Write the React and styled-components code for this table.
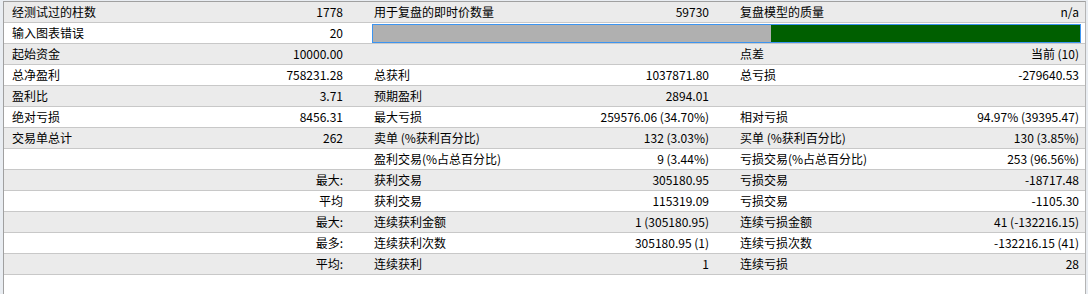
import React from 'react';
import styled, { createGlobalStyle } from 'styled-components';

const GlobalStyle = createGlobalStyle`
  html, body {
    margin: 0;
    padding: 0;
    background: #ffffff;
  }
  body {
    font-family: "Noto Sans CJK SC", "Noto Sans", sans-serif;
    font-size: 12px;
    color: #000;
  }
`;

const Page = styled.div`
  height: 294px;
  box-sizing: border-box;
  padding: 1px 2px 0 3px;
  background: #e9edf2;
`;

const Frame = styled.div`
  height: 100%;
  box-sizing: border-box;
  background: #fff;
  border-top: 1px solid #a0a0a0;
  border-left: 1px solid #a0a0a0;
  border-right: 1px solid #b4b4b4;
`;

const Row = styled.div`
  display: grid;
  grid-template-columns: 196px 170px 190px 176px 190px 158px;
  height: 20px;
  border-bottom: 1px solid #c8c8c8;
  background: ${(p) => (p.$shade ? '#ebebeb' : '#ffffff')};
  line-height: 20px;
  white-space: nowrap;
`;

const Label = styled.div`
  padding-left: ${(p) => (p.$first ? '8px' : '4px')};
  overflow: hidden;
`;

const Value = styled.div`
  text-align: right;
  padding-right: ${(p) => (p.$last ? '5px' : '27px')};
  overflow: hidden;
`;

const BarCell = styled.div`
  grid-column: 3 / span 4;
  padding: 1px 3px 0 2px;
`;

const Bar = styled.div`
  display: flex;
  height: 19px;
  box-sizing: border-box;
  border: 1px solid #3c94f0;
  background: #b0b0b0;
`;

const Filled = styled.div`
  margin-left: auto;
  background: #005f00;
  height: 100%;
`;

const rows = [
  ['经测试过的柱数', '1778', '用于复盘的即时价数量', '59730', '复盘模型的质量', 'n/a'],
  ['输入图表错误', '20', 'bar'],
  ['起始资金', '10000.00', '', '', '点差', '当前 (10)'],
  ['总净盈利', '758231.28', '总获利', '1037871.80', '总亏损', '-279640.53'],
  ['盈利比', '3.71', '预期盈利', '2894.01', '', ''],
  ['绝对亏损', '8456.31', '最大亏损', '259576.06 (34.70%)', '相对亏损', '94.97% (39395.47)'],
  ['交易单总计', '262', '卖单 (%获利百分比)', '132 (3.03%)', '买单 (%获利百分比)', '130 (3.85%)'],
  ['', '', '盈利交易(%占总百分比)', '9 (3.44%)', '亏损交易(%占总百分比)', '253 (96.56%)'],
  ['', '最大:', '获利交易', '305180.95', '亏损交易', '-18717.48'],
  ['', '平均', '获利交易', '115319.09', '亏损交易', '-1105.30'],
  ['', '最大:', '连续获利金额', '1 (305180.95)', '连续亏损金额', '41 (-132216.15)'],
  ['', '最多:', '连续获利次数', '305180.95 (1)', '连续亏损次数', '-132216.15 (41)'],
  ['', '平均:', '连续获利', '1', '连续亏损', '28'],
];

// share of the quality bar drawn in green
const modelled = 43.7;

const App = () => (
  <>
    <GlobalStyle />
    <Page>
      <Frame>
        {rows.map((r, i) => (
          <Row key={i} $shade={i % 2 === 0}>
            <Label $first>{r[0]}</Label>
            <Value>{r[1]}</Value>
            {r[2] === 'bar' ? (
              <BarCell>
                <Bar>
                  <Filled style={{ width: `${modelled}%` }} />
                </Bar>
              </BarCell>
            ) : (
              <>
                <Label>{r[2]}</Label>
                <Value>{r[3]}</Value>
                <Label>{r[4]}</Label>
                <Value $last>{r[5]}</Value>
              </>
            )}
          </Row>
        ))}
      </Frame>
    </Page>
  </>
);

export default App;
